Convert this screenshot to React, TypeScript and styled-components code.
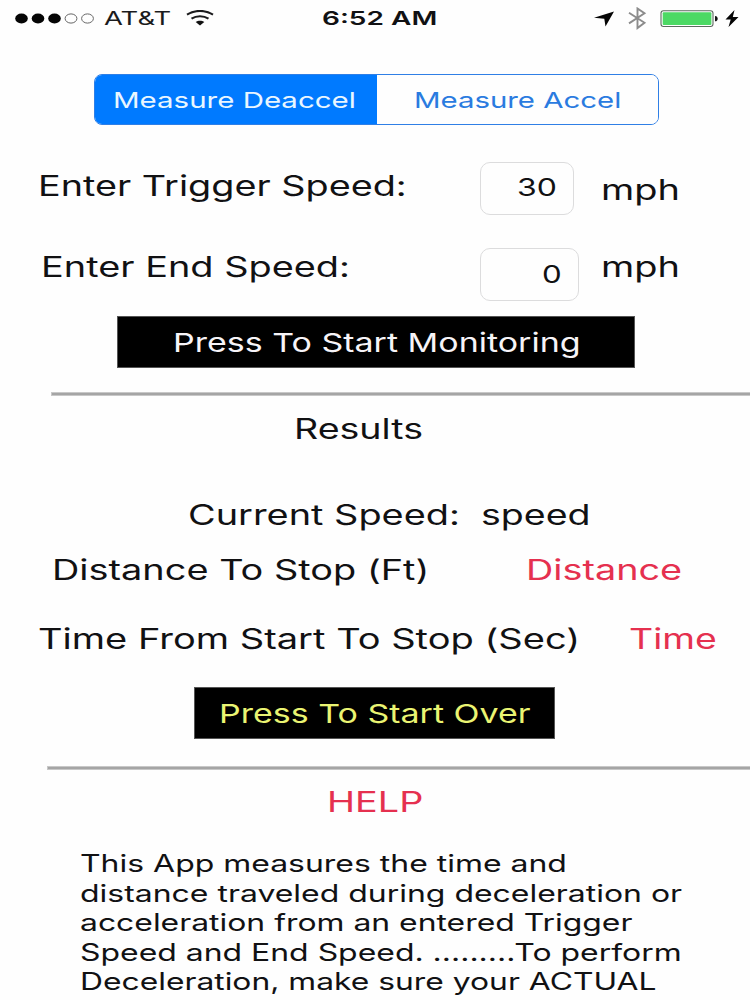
import React from 'react';
import styled, { createGlobalStyle } from 'styled-components';

const GlobalStyle = createGlobalStyle`
  * { box-sizing: border-box; }
  body { margin: 0; background: #fefefe; }
`;

const Screen = styled.main`
  width: 750px;
  height: 1000px;
  overflow: hidden;
  display: flex;
  flex-direction: column;
  align-items: flex-start;
  background: #fefefe;
  color: #111113;
  font-family: Inter, "Liberation Sans", sans-serif;
`;

/* Wide lettering: the glyphs are stretched horizontally inside a fixed-width slot. */
const Slot = styled.span<{ $width: number; $drop: number }>`
  display: block;
  flex: none;
  width: ${(p) => p.$width}px;
  margin-top: ${(p) => p.$drop}px;
  text-align: left;
`;

const Glyphs = styled.span<{ $size: number; $stretch: number; $weight: number; $color: string }>`
  display: inline-block;
  white-space: pre;
  font-size: ${(p) => p.$size}px;
  font-weight: ${(p) => p.$weight};
  line-height: ${(p) => (p.$size === 28 ? 34 : 30)}px;
  color: ${(p) => p.$color};
  transform: scaleX(${(p) => p.$stretch});
  transform-origin: 0 50%;
  vertical-align: top;
`;

type WideProps = {
  children: string;
  width: number;
  stretch: number;
  size?: number;
  weight?: number;
  color?: string;
  drop?: number;
};

function Wide({ children, width, stretch, size = 28, weight = 400, color = 'inherit', drop = 0 }: WideProps) {
  return (
    <Slot $width={width} $drop={drop}>
      <Glyphs $size={size} $stretch={stretch} $weight={weight} $color={color}>{children}</Glyphs>
    </Slot>
  );
}

const StatusBar = styled.header`
  width: 100%;
  height: 37px;
  display: grid;
  grid-template-columns: 322px 1fr 156px;
  align-items: center;
`;

const Carrier = styled.div`
  display: flex;
  align-items: center;
  padding-left: 15px;
`;

const StatusIcons = styled.div`
  display: flex;
  align-items: center;
  height: 37px;
`;

const Icon = styled.svg<{ $left?: number; $right?: number }>`
  display: block;
  flex: none;
  margin-left: ${(p) => p.$left ?? 0}px;
  margin-right: ${(p) => p.$right ?? 0}px;
`;

const Segmented = styled.div`
  display: flex;
  width: 565px;
  height: 51px;
  margin: 37px 0 0 94px;
  border: 1.5px solid #2f7fe6;
  border-radius: 8px;
  overflow: hidden;
`;

const Segment = styled.button<{ $active?: boolean; $inset: number }>`
  display: flex;
  align-items: center;
  flex: ${(p) => (p.$active ? '0 0 282px' : '1')};
  padding: 0 0 0 ${(p) => p.$inset}px;
  border: 0;
  font-family: inherit;
  background: ${(p) => (p.$active ? '#007aff' : '#fefefe')};
  color: ${(p) => (p.$active ? '#e9f6ff' : '#2a7be0')};
`;

const FormRow = styled.div<{ $gap: number; $left: number }>`
  display: flex;
  align-items: flex-start;
  height: 53px;
  margin-top: ${(p) => p.$gap}px;
  padding-left: ${(p) => p.$left}px;
`;

const Field = styled.div<{ $width: number; $right: number; $lift: number }>`
  display: flex;
  flex: none;
  align-items: center;
  justify-content: flex-end;
  width: ${(p) => p.$width}px;
  height: 53px;
  margin-right: ${(p) => 120.5 - p.$width}px;
  padding: 0 ${(p) => p.$right}px ${(p) => p.$lift}px 0;
  border: 1.5px solid #dcdcdd;
  border-radius: 10px;
`;

const ActionButton = styled.button<{ $width: number; $left: number; $top: number; $inset: number }>`
  display: flex;
  align-items: center;
  width: ${(p) => p.$width}px;
  height: 52px;
  margin: ${(p) => p.$top}px 0 0 ${(p) => p.$left}px;
  padding: 1px 0 0 ${(p) => p.$inset}px;
  border: 1px solid #555;
  background: #000;
  font-family: inherit;
`;

const Divider = styled.hr<{ $left: number; $top: number }>`
  align-self: stretch;
  height: 4px;
  margin: ${(p) => p.$top}px 0 0 ${(p) => p.$left}px;
  border: solid #c8c8c8;
  border-width: 1px 0 1px 1px;
  background: #a5a5a5;
`;

const TextRow = styled.div<{ $left: number; $top: number }>`
  display: flex;
  height: 34px;
  margin: ${(p) => p.$top}px 0 0 ${(p) => p.$left}px;
`;

const HelpText = styled.div`
  display: flex;
  flex-direction: column;
  margin: 30px 0 0 80px;
`;

const HelpLine = styled.div`
  height: 29.5px;
`;

const red = '#e5304f';

const help: [string, number][] = [
  ['This App measures the time and', 1.331],
  ['distance traveled during deceleration or', 1.331],
  ['acceleration from an entered Trigger', 1.328],
  ['Speed and End Speed. .........To perform', 1.33],
  ['Deceleration, make sure your ACTUAL', 1.325],
];

export default function App() {
  return (
    <Screen>
      <GlobalStyle />
      <StatusBar>
        <Carrier>
          <Icon $right={9} width="80" height="14" viewBox="0 0 80 14">
            {[6.5, 23, 39.5].map((x) => <ellipse key={x} cx={x} cy="6.500" rx="6.3" ry="5" fill="#050505" />)}
            {[56, 72.5].map((x) => <ellipse key={x} cx={x} cy="6.500" rx="5.9" ry="4.6" fill="none" stroke="#666" strokeWidth="1" />)}
          </Icon>
          <Wide width={82} stretch={1.445} size={19} color="#1b1b1d">AT&amp;T</Wide>
          <Icon width="28" height="17" viewBox="0 0 28 17">
            <g fill="none" stroke="#1b1b1d" strokeWidth="2">
              <path d="M1 4.700C8.500 -.4 19.500 -.4 27 4.700" />
              <path d="M5.500 8.700C10.500 5.300 17.500 5.300 22.500 8.700" />
            </g>
            <path d="M9.700 12C12 10.200 16 10.200 18.300 12L14 15.500Z" fill="#111" />
          </Icon>
        </Carrier>
        <Wide width={115} stretch={1.475} size={19} weight={600}>6:52 AM</Wide>
        <StatusIcons>
          <Icon width="20" height="16" viewBox="0 0 20 16">
            <path d="M20 0.500L11.500 15.500L10.300 7.800L0 6.800Z" fill="#050505" />
          </Icon>
          <Icon $left={14} width="19" height="23" viewBox="0 0 19 23">
            <path d="M1 5.800L16.500 15.800L9.500 21V1.500L16.500 6.200L1 16.400" fill="none" stroke="#8c8c8c" strokeWidth="1.900" />
          </Icon>
          <Icon $left={13} width="58" height="18" viewBox="0 0 58 18">
            <rect x="1" y="0.800" width="52" height="15.700" rx="2.500" fill="#fff" stroke="#5e6a60" strokeWidth="1.100" />
            <rect x="2.700" y="2.300" width="48.700" height="12.700" rx="1" fill="#4cd964" />
            <path d="M55 6C58.600 6 58.600 11.300 55 11.300Z" fill="#111" />
          </Icon>
          <Icon $left={7} width="14" height="18" viewBox="0 0 14 18">
            <path d="M9.500 0L0.500 9.500H5.700L3.500 17L13.500 7H7.800Z" fill="#050505" />
          </Icon>
        </StatusIcons>
      </StatusBar>

      <Segmented>
        <Segment $active $inset={18}>
          <Wide width={244} stretch={1.339} size={22}>Measure Deaccel</Wide>
        </Segment>
        <Segment $inset={37}>
          <Wide width={208} stretch={1.335} size={22}>Measure Accel</Wide>
        </Segment>
      </Segmented>

      <FormRow $gap={37} $left={38}>
        <Wide width={442} stretch={1.349} drop={7}>Enter Trigger Speed:</Wide>
        <Field $width={94} $right={16} $lift={1}>
          <Wide width={40} stretch={1.33} size={24}>30</Wide>
        </Field>
        <Wide width={80} stretch={1.355} drop={11}>mph</Wide>
      </FormRow>
      <FormRow $gap={33} $left={40.5}>
        <Wide width={439.5} stretch={1.353} drop={2}>Enter End Speed:</Wide>
        <Field $width={99} $right={16} $lift={0}>
          <Wide width={20} stretch={1.3} size={24}>0</Wide>
        </Field>
        <Wide width={80} stretch={1.355} drop={2}>mph</Wide>
      </FormRow>

      <ActionButton $width={518} $left={117} $top={15} $inset={55}>
        <Wide width={408} stretch={1.307} size={26} color="#f7f4f8">Press To Start Monitoring</Wide>
      </ActionButton>

      <Divider $left={51} $top={24} />

      <TextRow $left={293.5} $top={16}>
        <Wide width={130} stretch={1.342}>Results</Wide>
      </TextRow>
      <TextRow $left={188} $top={52}>
        <Wide width={293} stretch={1.353}>Current Speed:</Wide>
        <Wide width={110} stretch={1.34}>speed</Wide>
      </TextRow>
      <TextRow $left={51.5} $top={21}>
        <Wide width={474.5} stretch={1.353}>Distance To Stop (Ft)</Wide>
        <Wide width={158} stretch={1.35} color={red}>Distance</Wide>
      </TextRow>
      <TextRow $left={38} $top={34.5}>
        <Wide width={591} stretch={1.358} >Time From Start To Stop (Sec)</Wide>
        <Wide width={90} stretch={1.335} color={red}>Time</Wide>
      </TextRow>

      <ActionButton $width={361} $left={194} $top={31.5} $inset={23.5}>
        <Wide width={320} stretch={1.307} size={26} color="#eaf472">Press To Start Over</Wide>
      </ActionButton>

      <Divider $left={47} $top={27} />

      <TextRow $left={326.5} $top={15}>
        <Wide width={98} stretch={1.349} color={red}>HELP</Wide>
      </TextRow>

      <HelpText>
        {help.map(([line, stretch]) => (
          <HelpLine key={line}>
            <Wide width={620} stretch={stretch} size={24}>{line}</Wide>
          </HelpLine>
        ))}
      </HelpText>
    </Screen>
  );
}
